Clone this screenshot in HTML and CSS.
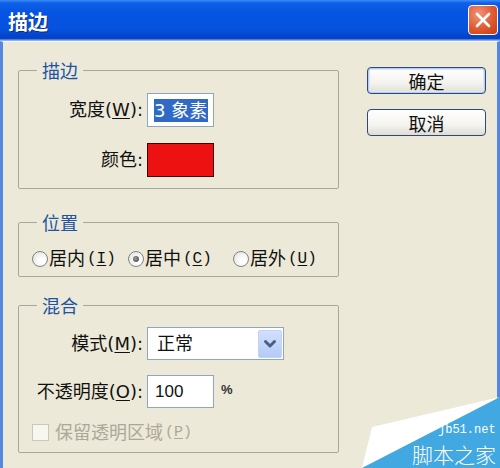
FILE: index.html
```html
<!DOCTYPE html>
<html>
<head>
<meta charset="utf-8">
<link rel="stylesheet" href="styles.css">
</head>
<body>
<div class="window">
  <div class="titlebar">
    <span class="title">描边</span>
    <span class="close">
      <svg width="16" height="16" viewBox="0 0 16 16"><path d="M2 2 L14 14 M14 2 L2 14" stroke="#fff" stroke-width="2.6" stroke-linecap="round"/></svg>
    </span>
  </div>
  <div class="body">
    <div class="left">
      <fieldset class="group g1">
        <legend>描边</legend>
        <div class="form">
          <span class="label">宽度(<u>W</u>):</span>
          <span class="input w"><span class="hl">3 象素</span></span>
          <span class="label">颜色:</span>
          <span class="swatch"></span>
        </div>
      </fieldset>
      <fieldset class="group g2">
        <legend>位置</legend>
        <div class="radios">
          <span class="radio"><span class="dot"></span>居内<span class="acc">(<u>I</u>)</span></span>
          <span class="radio"><span class="dot on"></span>居中<span class="acc">(<u>C</u>)</span></span>
          <span class="radio"><span class="dot"></span>居外<span class="acc">(<u>U</u>)</span></span>
        </div>
      </fieldset>
      <fieldset class="group g3">
        <legend>混合</legend>
        <div class="form f3">
          <span class="label">模式(<u>M</u>):</span>
          <span class="select"><span class="seltext">正常</span><span class="arrow"><svg width="14" height="10" viewBox="0 0 14 10"><path d="M2.5 2.5 L7 7 L11.5 2.5" fill="none" stroke="#4B5F85" stroke-width="3" stroke-linecap="round" stroke-linejoin="round"/></svg></span></span>
          <span class="label">不透明度(<u>O</u>):</span>
          <span class="opacity"><span class="input num">100</span><span class="pct">%</span></span>
          <span class="check"><span class="box"></span>保留透明区域<span class="acc">(<u>P</u>)</span></span>
        </div>
      </fieldset>
    </div>
    <div class="right">
      <span class="btn default">确定</span>
      <span class="btn">取消</span>
    </div>
  </div>
  <div class="watermark">
    <svg width="140" height="72" viewBox="0 0 140 72">
      <polygon points="12,31 140,1 2,72" fill="#ffffff"/>
      <polygon points="140,1 140,72 2,72" fill="#41A8E1"/>
    </svg>
    <span class="wm-url">jb51.net</span>
    <span class="wm-name">脚本之家</span>
  </div>
</div>
</body>
</html>
```

FILE: styles.css
```css
* { box-sizing: border-box; }
html, body { margin: 0; padding: 0; }
body {
  font-family: "DejaVu Sans", "Noto Sans CJK SC", sans-serif;
  font-size: 18px;
  color: #111;
}
.window {
  position: relative;
  width: 500px;
  height: 468px;
  overflow: hidden;
  display: flex;
  flex-direction: column;
  background: #ECE9D8;
}
.titlebar {
  height: 41px;
  flex: none;
  display: flex;
  align-items: center;
  justify-content: space-between;
  padding: 2px 2px 0 8px;
  background: linear-gradient(#3C8CF4 0px, #0F5FE8 3px, #0655E2 12px, #0552DE 30px, #0442C6 37px, #0A46C4 39px, #8FB3EE 40px);
}
.title {
  font-family: "Noto Sans CJK SC", sans-serif;
  font-weight: 700;
  font-size: 20px;
  line-height: 22px;
  color: #fff;
  text-shadow: 1px 1px 0 #0A2A80;
}
.close {
  width: 30px;
  height: 30px;
  margin-top: -3px;
  border: 1px solid #fff;
  border-radius: 4px;
  background: radial-gradient(circle at 35% 30%, #F0957A, #E0592F 55%, #C23A18);
  display: flex;
  align-items: center;
  justify-content: center;
}
.body {
  flex: 1;
  display: flex;
  border-left: 3px solid #5387E0;
  border-right: 3px solid #5387E0;
  border-top: 1px solid #F6F5EF;
}
.left {
  width: 321px;
  margin-left: 15px;
  display: flex;
  flex-direction: column;
}
.group {
  width: 321px;
  margin: 0;
  padding: 0;
  border: 1px solid #A8A79B;
  border-radius: 2px;
}
.g1 { margin-top: 19px; }
.g2 { margin-top: 24px; }
.g3 { margin-top: 19px; }
legend {
  margin-left: 18px;
  padding: 0 5px;
  font-family: "Noto Sans CJK SC", sans-serif;
  font-size: 18px;
  line-height: 18px;
  color: #2153A4;
}
.form {
  display: grid;
  grid-template-columns: 124px auto;
  column-gap: 4px;
  row-gap: 16px;
  align-items: center;
  padding: 14px 0 11px;
}
.label {
  justify-self: end;
  line-height: 22px;
  white-space: nowrap;
}
u { text-decoration-thickness: 1px; text-underline-offset: 2px; }
.input {
  display: flex;
  align-items: center;
  height: 34px;
  border: 1px solid #8FA6C0;
  background: #fff;
}
.input.w { width: 67px; padding-left: 6px; }
.hl {
  background: #316AC5;
  color: #fff;
  line-height: 23px;
  padding-right: 1px;
  white-space: nowrap;
}
.swatch {
  width: 67px;
  height: 34px;
  border: 1px solid #3A0606;
  background: #EE1111;
}
.radios {
  display: grid;
  grid-template-columns: 96px 105px auto;
  align-items: center;
  padding: 17px 0 6px 13px;
}
.radio, .check {
  display: flex;
  align-items: center;
  height: 22px;
  line-height: 22px;
  white-space: nowrap;
}
.dot {
  width: 16px;
  height: 16px;
  margin-right: 1px;
  border: 1px solid #7F838A;
  border-radius: 50%;
  background: radial-gradient(circle at 65% 65%, #FFFFFF 20%, #E3E2DA 90%);
  display: flex;
  align-items: center;
  justify-content: center;
}
.dot.on::after {
  content: "";
  width: 6px;
  height: 6px;
  border-radius: 50%;
  background: radial-gradient(circle at 40% 40%, #9A9A9A, #3F3F3F);
}
.acc {
  font-family: "Liberation Mono", monospace;
  font-size: 16px;
  margin-left: 2px;
}
.f3 {
  row-gap: 15px;
  padding: 13px 0 9px;
}
.select {
  width: 137px;
  height: 33px;
  border: 1px solid #8FA6C0;
  background: #fff;
  display: flex;
  align-items: center;
  justify-content: space-between;
  padding: 1px 1px 1px 9px;
}
.seltext { line-height: 22px; }
.arrow {
  width: 24px;
  height: 28px;
  border: 1px solid #C3D3F4;
  border-radius: 2px;
  background: linear-gradient(#D2E0FC, #B4CAF6);
  display: flex;
  align-items: center;
  justify-content: center;
}
.opacity {
  display: flex;
  align-items: center;
}
.input.num {
  width: 67px;
  height: 33px;
  padding-left: 7px;
  font-family: "Liberation Sans", sans-serif;
  font-size: 17px;
}
.pct {
  margin-left: 7px;
  margin-top: -4px;
  font-family: "Liberation Sans", sans-serif;
  font-size: 13px;
  font-weight: 700;
  color: #333;
}
.check {
  grid-column: 1 / -1;
  padding-left: 13px;
  color: #ACA899;
  margin-top: -1px;
  height: 21px;
}
.check .acc { font-size: 15px; }
.box {
  width: 17px;
  height: 17px;
  margin-right: 6px;
  border: 1px solid #CAC8BB;
  background: #F7F6F1;
}
.right {
  margin-left: 28px;
  margin-top: 25px;
  display: flex;
  flex-direction: column;
  gap: 15px;
}
.btn {
  width: 119px;
  height: 27px;
  border: 1px solid #2D4A78;
  border-radius: 4px;
  background: linear-gradient(#FFFFFF, #F4F3EE 60%, #DEDDD5);
  display: flex;
  align-items: center;
  justify-content: center;
  font-family: "Noto Sans CJK SC", sans-serif;
  font-size: 18px;
  line-height: 20px;
}
.btn.default {
  box-shadow: inset 0 0 0 1px #B6CCF3, inset 0 0 0 2px #DCE6F8;
}
.watermark {
  position: absolute;
  right: 0;
  bottom: 0;
  width: 140px;
  height: 72px;
}
.watermark svg { display: block; }
.wm-url {
  position: absolute;
  left: 78px;
  top: 28px;
  font-family: "Liberation Mono", monospace;
  font-size: 12px;
  line-height: 13px;
  color: #fff;
}
.wm-name {
  position: absolute;
  left: 52px;
  top: 47px;
  font-family: "Noto Sans CJK SC", sans-serif;
  font-weight: 300;
  font-size: 21px;
  line-height: 22px;
  color: #fff;
  white-space: nowrap;
}
```
